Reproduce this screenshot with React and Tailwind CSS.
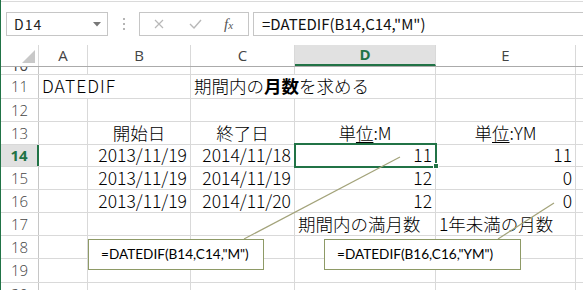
import React from "react";

const JP = "font-['Noto_Sans_CJK_JP',sans-serif]";
const UI = "font-['Open_Sans',sans-serif]";

const W = { A: "w-[49px]", B: "w-[103px]", C: "w-[104px]", D: "w-[141px]", E: "w-[140px]" };

function Cell({ w, children, align = "left", noRight = false, className = "" }) {
  const a = align === "right" ? "justify-end pr-[3px]" : align === "center" ? "justify-center" : "justify-start pl-[3px]";
  return (
    <div
      className={`${w} shrink-0 h-full flex items-center ${a} ${noRight ? "" : "border-r border-[#d9d9d9]"} whitespace-nowrap ${className}`}
    >
      {children}
    </div>
  );
}

function RowHead({ n, selected }) {
  return (
    <div
      className={`w-[38px] shrink-0 h-full flex items-center justify-center ${UI} text-[15px] ${
        selected
          ? "bg-[#e1e1e1] text-[#217346] font-bold border-r-2 border-[#217346]"
          : "text-[#444] border-r border-[#c6c6c6]"
      }`}
    >
      {n}
    </div>
  );
}

function Row({ n, h, selected, children }) {
  return (
    <div className={`flex ${h} border-b border-[#d9d9d9] ${JP} font-light text-[17.5px] text-black`}>
      <RowHead n={n} selected={selected} />
      {children}
      <div className="flex-1" />
    </div>
  );
}

export default function App() {
  return (
    <div className="relative w-[583px] h-[290px] overflow-hidden bg-white border-l border-[#217346]">
      {/* top strip */}
      <div className="h-[1px]" />
      <div className="h-[1px] bg-[#dadada]" />
      <div className="h-[10px]" />

      {/* formula bar */}
      <div className="flex h-[24px] items-stretch">
        <div className="ml-[5px] w-[102px] border border-[#c6c6c6] flex items-center justify-between pl-[7px] pr-[6px]">
          <span className={`${JP} text-[14px] text-[#222] tracking-[1px]`}>D14</span>
          <svg width="8" height="5" viewBox="0 0 8 5">
            <path d="M0 0 L8 0 L4 4.5 Z" fill="#777" />
          </svg>
        </div>
        <div className="w-[31px] flex flex-col items-center justify-center gap-[3px]">
          <div className="w-[2px] h-[2px] bg-[#b5b5b5]" />
          <div className="w-[2px] h-[2px] bg-[#b5b5b5]" />
          <div className="w-[2px] h-[2px] bg-[#b5b5b5]" />
        </div>
        <div className="w-[110px] border border-[#c6c6c6] flex items-center">
          <svg className="ml-[14px]" width="10" height="10" viewBox="0 0 10 10">
            <path d="M1 1 L9 9 M9 1 L1 9" stroke="#b8b8b8" strokeWidth="1.2" />
          </svg>
          <svg className="ml-[25px]" width="13" height="10" viewBox="0 0 13 10">
            <path d="M1 5 L5 9 L12 1" stroke="#b8b8b8" strokeWidth="1.4" fill="none" />
          </svg>
          <span className="ml-[22px] font-['Liberation_Serif',serif] italic text-[15px] text-[#555] leading-none">
            f<span className="text-[11px]">x</span>
          </span>
        </div>
        <div className="ml-[4px] flex-1 border-t border-b border-l border-[#c6c6c6] flex items-center pl-[8px]">
          <span className={`${JP} text-[15px] text-[#111]`}>=DATEDIF(B14,C14,"M")</span>
        </div>
      </div>

      <div className="h-[9px]" />

      {/* column headers */}
      <div className={`flex h-[22px] border-b border-[#ababab] ${UI} text-[15px] text-[#444]`}>
        <div className="w-[38px] shrink-0 h-full border-r border-[#d9d9d9] relative">
          <svg className="absolute right-[3px] bottom-[3px]" width="13" height="13" viewBox="0 0 13 13">
            <path d="M13 0 L13 13 L0 13 Z" fill="#c8c8c8" />
          </svg>
        </div>
        <div className={`${W.A} shrink-0 h-full flex items-center justify-center border-r border-[#d9d9d9]`}>A</div>
        <div className={`${W.B} shrink-0 h-full flex items-center justify-center border-r border-[#d9d9d9]`}>B</div>
        <div className={`${W.C} shrink-0 h-full flex items-center justify-center border-r border-[#d9d9d9]`}>C</div>
        <div className={`${W.D} shrink-0 h-full flex items-center justify-center bg-[#e1e1e1] border-b-2 border-[#217346] text-[#217346] font-bold border-r border-r-[#d9d9d9]`}>D</div>
        <div className={`${W.E} shrink-0 h-full flex items-center justify-center border-r border-[#d9d9d9]`}>E</div>
        <div className="flex-1" />
      </div>

      {/* row 10 partial */}
      <div className={`flex h-[8px] border-b border-[#d9d9d9] overflow-hidden`}>
        <div className={`w-[38px] shrink-0 h-full border-r border-[#c6c6c6] ${UI} text-[15px] text-[#444] flex justify-center items-end leading-none`}>
          <span className="translate-y-[-1px]">10</span>
        </div>
        <Cell w={W.A} /> <Cell w={W.B} /> <Cell w={W.C} /> <Cell w={W.D} /> <Cell w={W.E} />
      </div>

      <Row n="11" h="h-[24px]">
        <Cell w={W.A} noRight>
          <span className="tracking-[1px]">DATEDIF</span>
        </Cell>
        <Cell w={W.B} />
        <Cell w={W.C} noRight>
          <span>
            期間内の<b className="font-bold">月数</b>を求める
          </span>
        </Cell>
        <Cell w={W.D} />
        <Cell w={W.E} />
      </Row>
      <Row n="12" h="h-[23px]">
        <Cell w={W.A} /> <Cell w={W.B} /> <Cell w={W.C} /> <Cell w={W.D} /> <Cell w={W.E} />
      </Row>
      <Row n="13" h="h-[23px]">
        <Cell w={W.A} />
        <Cell w={W.B} align="center">開始日</Cell>
        <Cell w={W.C} align="center">終了日</Cell>
        <Cell w={W.D} align="center">
          <span>
            単<span className="underline underline-offset-2">位</span>:M
          </span>
        </Cell>
        <Cell w={W.E} align="center">
          <span>
            単<span className="underline underline-offset-2">位</span>:YM
          </span>
        </Cell>
      </Row>
      <Row n="14" h="h-[22px]" selected>
        <Cell w={W.A} />
        <Cell w={W.B} align="right">2013/11/19</Cell>
        <Cell w={W.C} align="right">2014/11/18</Cell>
        <Cell w={W.D} align="right">11</Cell>
        <Cell w={W.E} align="right">11</Cell>
      </Row>
      <Row n="15" h="h-[23px]">
        <Cell w={W.A} />
        <Cell w={W.B} align="right">2013/11/19</Cell>
        <Cell w={W.C} align="right">2014/11/19</Cell>
        <Cell w={W.D} align="right">12</Cell>
        <Cell w={W.E} align="right">0</Cell>
      </Row>
      <Row n="16" h="h-[23px]">
        <Cell w={W.A} />
        <Cell w={W.B} align="right">2013/11/19</Cell>
        <Cell w={W.C} align="right">2014/11/20</Cell>
        <Cell w={W.D} align="right">12</Cell>
        <Cell w={W.E} align="right">0</Cell>
      </Row>
      <Row n="17" h="h-[23px]">
        <Cell w={W.A} /> <Cell w={W.B} /> <Cell w={W.C} />
        <Cell w={W.D}>期間内の満月数</Cell>
        <Cell w={W.E}>1年未満の月数</Cell>
      </Row>
      <Row n="18" h="h-[23px]">
        <Cell w={W.A} /> <Cell w={W.B} /> <Cell w={W.C} /> <Cell w={W.D} /> <Cell w={W.E} />
      </Row>
      <Row n="19" h="h-[24px]">
        <Cell w={W.A} /> <Cell w={W.B} /> <Cell w={W.C} /> <Cell w={W.D} /> <Cell w={W.E} />
      </Row>
      <Row n="20" h="h-[23px]">
        <Cell w={W.A} /> <Cell w={W.B} /> <Cell w={W.C} /> <Cell w={W.D} /> <Cell w={W.E} />
      </Row>

      {/* selection rectangle D14 */}
      <div className="absolute left-[293px] top-[143px] w-[143px] h-[25px] border-2 border-[#217346] pointer-events-none" />
      <div className="absolute left-[432px] top-[163px] w-[6px] h-[6px] bg-[#217346] border border-white" />

      {/* leader lines */}
      <svg className="absolute left-0 top-0" width="583" height="290" viewBox="0 0 583 290">
        <line x1="243" y1="239" x2="399" y2="157" stroke="#a3a37a" strokeWidth="1.2" />
        <line x1="497" y1="239" x2="553" y2="203" stroke="#a3a37a" strokeWidth="1.2" />
      </svg>

      {/* callouts */}
      <div className="absolute left-[87px] top-[239px] w-[176px] h-[31px] bg-white border border-[#8e9a66] flex items-center pl-[12px]">
        <span className="font-['Lato',sans-serif] text-[13.6px] text-black">=DATEDIF(B14,C14,"M")</span>
      </div>
      <div className="absolute left-[323px] top-[239px] w-[197px] h-[31px] bg-white border border-[#8e9a66] flex items-center pl-[12px]">
        <span className="font-['Lato',sans-serif] text-[13.6px] text-black">=DATEDIF(B16,C16,"YM")</span>
      </div>
    </div>
  );
}
